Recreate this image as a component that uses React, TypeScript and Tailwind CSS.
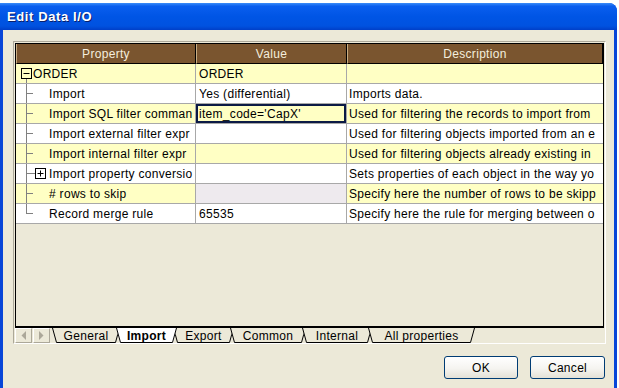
import React from 'react';

type Node = 'root' | 'leaf' | 'folder' | 'last';

interface GridRow {
  name: string;
  value: string;
  desc: string;
  node: Node;
  shade: boolean;
  selected?: boolean;
  disabled?: boolean;
}

const rows: GridRow[] = [
  { name: 'ORDER', value: 'ORDER', desc: '', node: 'root', shade: true },
  { name: 'Import', value: 'Yes (differential)', desc: 'Imports data.', node: 'leaf', shade: false },
  { name: 'Import SQL filter comman', value: "item_code='CapX'", desc: 'Used for filtering the records to import from', node: 'leaf', shade: true, selected: true },
  { name: 'Import external filter expr', value: '', desc: 'Used for filtering objects imported from an e', node: 'leaf', shade: false },
  { name: 'Import internal filter expr', value: '', desc: 'Used for filtering objects already existing in', node: 'leaf', shade: true },
  { name: 'Import property conversio', value: '', desc: 'Sets properties of each object in the way yo', node: 'folder', shade: false },
  { name: '# rows to skip', value: '', desc: 'Specify here the number of rows to be skipp', node: 'leaf', shade: true, disabled: true },
  { name: 'Record merge rule', value: '65535', desc: 'Specify here the rule for merging between o', node: 'last', shade: false },
];

const tabs = [
  { label: 'General', w: 68, cls: 'w-[68px]' },
  { label: 'Import', w: 61, cls: 'w-[61px]', active: true },
  { label: 'Export', w: 61, cls: 'w-[61px]' },
  { label: 'Common', w: 76, cls: 'w-[76px]' },
  { label: 'Internal', w: 70, cls: 'w-[70px]' },
  { label: 'All properties', w: 107, cls: 'w-[107px]' },
];

function TreeGlyph({ node }: { node: Node }) {
  if (node === 'root') {
    return (
      <svg width="17" height="19" className="shrink-0">
        <rect x="5.5" y="4.5" width="10" height="10" fill="none" stroke="#000" />
        <line x1="7.5" y1="9.5" x2="13.5" y2="9.5" stroke="#000" />
        <line x1="10.5" y1="15" x2="10.5" y2="19" stroke="#808080" />
      </svg>
    );
  }
  return (
    <svg width="33" height="19" className="shrink-0">
      <line x1="10.5" y1="0" x2="10.5" y2={node === 'last' ? 10 : 19} stroke="#808080" />
      <line x1="10" y1="9.5" x2={node === 'folder' ? 19 : 17} y2="9.5" stroke="#808080" />
      {node === 'folder' && (
        <>
          <rect x="19.5" y="4.5" width="10" height="10" fill="none" stroke="#000" />
          <line x1="21.5" y1="9.5" x2="27.5" y2="9.5" stroke="#000" />
          <line x1="24.5" y1="6.5" x2="24.5" y2="12.5" stroke="#000" />
        </>
      )}
    </svg>
  );
}

function HeaderCell({ label, cls }: { label: string; cls: string }) {
  return (
    <div className={`${cls} flex items-center justify-center border-l border-r border-b border-l-[#C9AE84] border-r-black border-b-black bg-[#7A552F] text-[#F4EEDD]`}>
      {label}
    </div>
  );
}

function Row({ row }: { row: GridRow }) {
  const bg = row.shade ? 'bg-[#FFFFC4]' : 'bg-white';
  const valueBg = row.disabled ? 'bg-[#EEEAEE]' : bg;
  return (
    <div className="flex h-[20px] border-b border-[#A8A8A8]">
      <div className={`flex w-[180px] shrink-0 items-center overflow-hidden whitespace-nowrap border-r border-[#A8A8A8] ${bg}`}>
        <TreeGlyph node={row.node} />
        <span>{row.name}</span>
      </div>
      <div
        className={`flex w-[151px] shrink-0 items-center overflow-hidden whitespace-nowrap border-r border-[#A8A8A8] pl-[3px] ${valueBg} ${
          row.selected ? 'shadow-[inset_0_0_0_2px_#0B1A45]' : ''
        }`}
      >
        {row.value}
      </div>
      <div className={`flex min-w-0 flex-1 items-center overflow-hidden whitespace-nowrap pl-[2px] ${bg}`}>{row.desc}</div>
    </div>
  );
}

function ScrollBtn({ dir }: { dir: 'left' | 'right' }) {
  return (
    <div className="flex h-[15px] w-[17px] items-center justify-center border border-t-white border-l-white border-r-[#ACA899] border-b-[#ACA899]">
      <svg width="5" height="9">
        <polygon points={dir === 'left' ? '5,0 5,9 0.5,4.5' : '0,0 0,9 4.5,4.5'} fill="#ACA899" />
      </svg>
    </div>
  );
}

function Tab({ label, w, cls, active }: { label: string; w: number; cls: string; active?: boolean }) {
  return (
    <div className={`relative -ml-[4px] h-[15px] shrink-0 first:ml-0 ${cls} ${active ? 'z-10 font-bold' : ''}`}>
      <svg className="absolute inset-0" width={w} height="15">
        <polygon points={`0,0 ${w},0 ${w - 4},15 4,15`} fill={active ? '#FFFFFF' : '#ECE9D8'} />
        <polyline points={`0.5,0 4.5,14.5 ${w - 4.5},14.5 ${w - 0.5},0`} fill="none" stroke="#000" />
      </svg>
      <span className="relative flex h-full items-center justify-center">{label}</span>
    </div>
  );
}

function PropertyFrame() {
  return (
    <div className="flex h-[303px] flex-col border border-t-[#ACA899] border-l-[#ACA899] border-b-white border-r-white">
      <div className="mx-px mt-px flex flex-1 flex-col border border-b-2 border-black bg-[#ECE9D8]">
        <div className="flex h-[20px]">
          <HeaderCell label="Property" cls="w-[180px]" />
          <HeaderCell label="Value" cls="w-[151px]" />
          <HeaderCell label="Description" cls="flex-1" />
        </div>
        {rows.map((r) => (
          <Row key={r.name} row={r} />
        ))}
      </div>
      <div className="flex h-[15px] shrink-0">
        <div className="ml-px flex gap-px">
          <ScrollBtn dir="left" />
          <ScrollBtn dir="right" />
        </div>
        <div className="ml-[2px] flex">
          {tabs.map((t) => (
            <Tab key={t.label} {...t} />
          ))}
        </div>
      </div>
    </div>
  );
}

function XpButton({ label, cls }: { label: string; cls: string }) {
  return (
    <button
      className={`${cls} h-[23px] rounded-[3px] border border-[#003C74] bg-[linear-gradient(180deg,#FFFFFF_0%,#F5F4F0_55%,#E4E1D6_100%)] text-[12px] text-black`}
    >
      {label}
    </button>
  );
}

export default function App() {
  return (
    <div className="h-[388px] w-[619px] overflow-hidden bg-white font-['Liberation_Sans',Arial,sans-serif] text-[12px] tracking-[0.3px] text-black">
      <div className="mt-[3px] flex h-[385px] w-[617px] flex-col overflow-hidden rounded-tr-[8px] bg-[#0846D8]">
        <div className="flex h-[27px] shrink-0 items-center bg-[linear-gradient(180deg,#3A8CF8_0%,#0A5EEE_12%,#0055E5_50%,#0052E0_85%,#003FC8_100%)] pl-[7px] text-[13px] font-bold tracking-[0.6px] text-white [text-shadow:1px_1px_0_#0A1F6B]">
          Edit Data I/O
        </div>
        <div className="mx-[3px] flex flex-1 flex-col bg-[#ECE9D8] pl-[10px] pr-[8px] pt-[11px]">
          <PropertyFrame />
          <div className="mt-[12px] flex justify-end gap-[12px] pr-px">
            <XpButton label="OK" cls="w-[74px]" />
            <XpButton label="Cancel" cls="w-[75px]" />
          </div>
        </div>
      </div>
    </div>
  );
}
